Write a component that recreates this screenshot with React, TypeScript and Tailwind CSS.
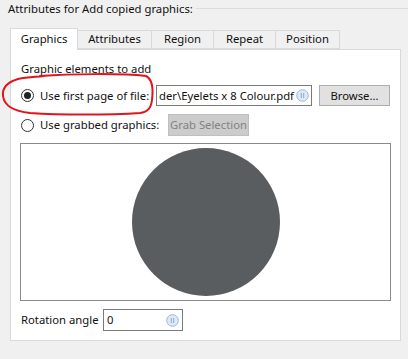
import React from 'react';

const font = { fontFamily: '"Segoe UI", "Noto Sans", "Open Sans", sans-serif' };

function InfoIcon() {
  return (
    <svg width="13" height="13" viewBox="0 0 13 13" className="shrink-0">
      <circle cx="6.5" cy="6.5" r="5.8" fill="#dfe9f5" stroke="#9db8d8" strokeWidth="1" />
      <path d="M5.3 4 L5.3 9 M7.7 4 L7.7 9" stroke="#8aa8cc" strokeWidth="1" />
    </svg>
  );
}

function Radio({ checked }: { checked?: boolean }) {
  return (
    <span className="w-[13px] h-[13px] rounded-full border border-[#333] bg-white flex items-center justify-center shrink-0">
      {checked && <span className="w-[7px] h-[7px] rounded-full bg-[#222]" />}
    </span>
  );
}

const tabs = ['Graphics', 'Attributes', 'Region', 'Repeat', 'Position'];
const tabWidths = ['w-[68px]', 'w-[74px]', 'w-[62px]', 'w-[62px]', 'w-[64px]'];

export default function App() {
  return (
    <div className="relative w-[408px] h-[359px] bg-[#f0f0f0] overflow-hidden text-[11.3px] text-[#111] whitespace-nowrap" style={font}>
      <div className="flex items-center h-4 pl-[8px] pt-[1px]">
        <span className="leading-4">Attributes for Add copied graphics:</span>
        <span className="flex-1 ml-[3px] border-t border-[#dcdcdc]" />
      </div>

      <div className="ml-[10px] mt-[11px] flex items-end h-[22px]">
        {tabs.map((t, i) => (
          <div
            key={t}
            className={
              i === 0
                ? `${tabWidths[i]} h-[22px] bg-white border border-b-0 border-[#d9d9d9] relative z-10 mb-[-1px] flex items-center justify-center leading-4 pb-[2px]`
                : `${tabWidths[i]} h-[19px] bg-[#f0f0f0] border border-l-0 border-[#d9d9d9] flex items-center justify-center leading-4 pb-[1px]`
            }
          >
            {t}
          </div>
        ))}
      </div>

      <div className="ml-[10px] w-[391px] h-[292px] bg-white border border-[#d9d9d9] px-[10px] pt-[11px]">
        <div className="leading-4 h-4">Graphic elements to add</div>

        <div className="mt-[8px] flex items-center h-[21px]">
          <Radio checked />
          <span className="ml-[6px] w-[116px] leading-4">Use first page of file:</span>
          <div className="w-[156px] h-[21px] border border-[#7a7a7a] flex items-center pl-[2px] pr-[2px]">
            <span className="flex-1 leading-4 overflow-hidden">der\Eyelets x 8 Colour.pdf</span>
            <InfoIcon />
          </div>
          <div className="ml-[7px] w-[71px] h-[21px] bg-[#e1e1e1] border border-[#adadad] flex items-center justify-center leading-4">
            Browse...
          </div>
        </div>

        <div className="mt-[8px] flex items-center h-[22px]">
          <Radio />
          <span className="ml-[6px] w-[128px] leading-4">Use grabbed graphics:</span>
          <div className="w-[81px] h-[22px] bg-[#cccccc] border border-[#bfbfbf] flex items-center justify-center leading-4 text-[#838383]">
            Grab Selection
          </div>
        </div>

        <div className="mt-[7px] -ml-[1px] w-[371px] h-[158px] border border-[#8a8a8a] flex items-center justify-center">
          <div className="w-[148px] h-[148px] rounded-full bg-[#5a5d5f]" />
        </div>

        <div className="mt-[8px] flex items-center h-[22px]">
          <span className="leading-4 w-[82px]">Rotation angle</span>
          <div className="w-[80px] h-[22px] border border-[#7a7a7a] flex items-center pl-[3px] pr-[3px]">
            <span className="flex-1 leading-4">0</span>
            <InfoIcon />
          </div>
        </div>
      </div>

      <svg className="absolute left-0 top-0 pointer-events-none" width="408" height="359">
        <path
          d="M40 76 C 70 74, 120 73, 146 76 C 154 80, 153 92, 152 100 C 151 108, 148 112, 140 113 C 110 115, 60 115, 30 113 C 12 111, 4 104, 3 96 C 2 88, 8 82, 18 79 C 28 77, 36 77, 44 76"
          fill="none"
          stroke="#e0141b"
          strokeWidth="2"
          strokeLinecap="round"
        />
      </svg>
    </div>
  );
}
